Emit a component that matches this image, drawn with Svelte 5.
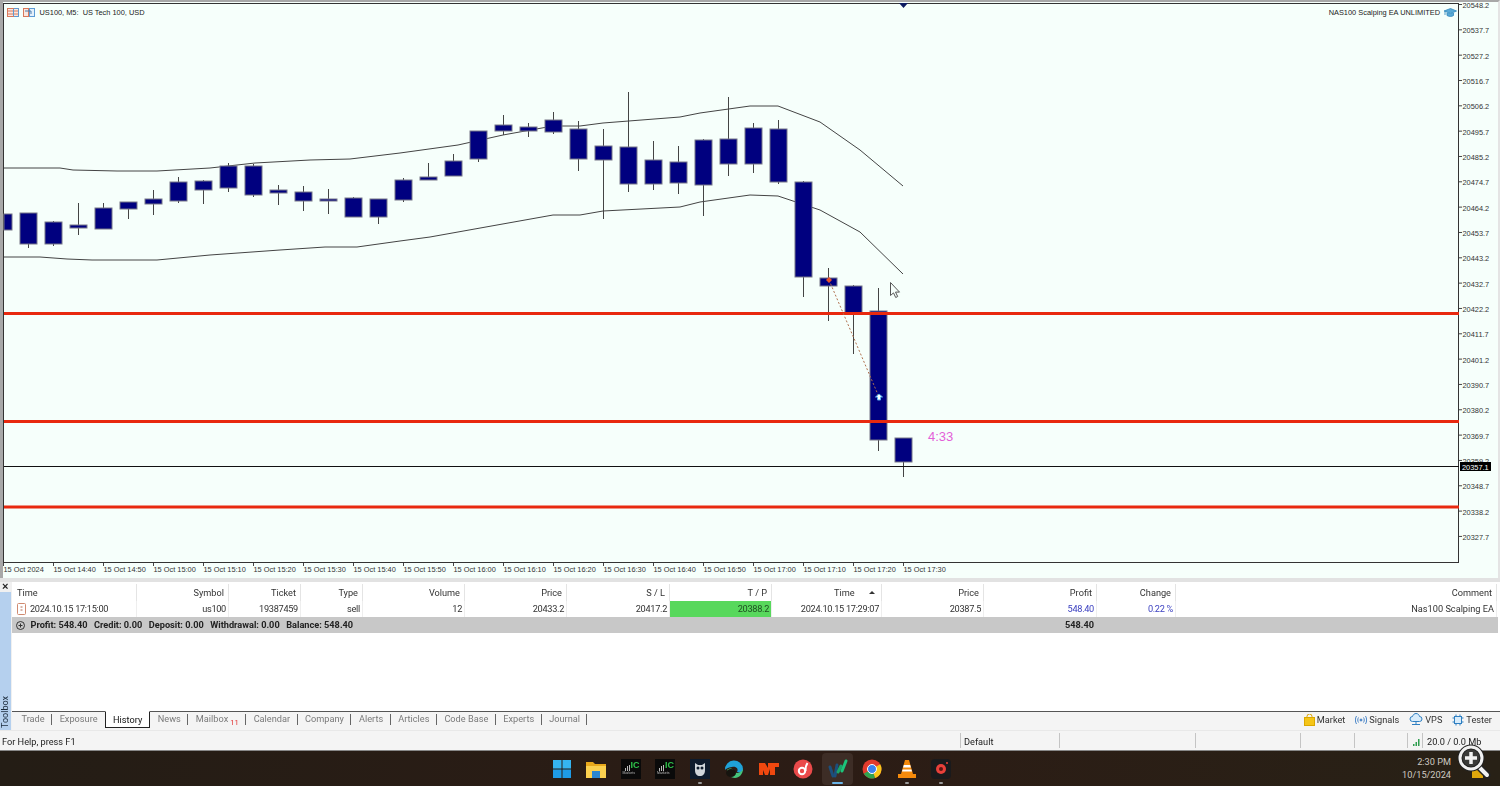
<script>
  // [bodyTop, bodyBottom, wickTop, wickBottom]
  const candles = [
    [214,230,214,230],[213,244,213,248],[222,244,221,246],[225,228,203,235],[208,229,203,229],
    [202,209,202,219],[199,204,190,215],[182,201,177,203],[181,190,180,204],[166,188,163,192],
    [166,195,164,197],[190,193,185,205],[192,201,186,211],[199,201,189,214],[198,217,197,217],
    [199,217,199,224],[180,200,178,202],[177,180,163,180],[161,176,154,176],[131,159,131,162],
    [125,131,115,135],[127,131,123,137],[120,132,112,134],[129,159,121,171],[146,160,129,219],
    [147,184,92,192],[160,184,141,190],[162,183,146,194],[140,185,139,216],[139,164,97,176],
    [128,164,123,173],[129,182,120,184],[182,277,181,297],[278,286,268,321],[286,314,285,354],
    [311,440,288,451],[438,462,438,477]
  ];
  const upper = "4,168 60,168 73,170 117,171 157,171 210,168 255,163 310,160 350,159 400,153 458,145 503,135 553,126 580,126 603,123 680,117 700,113 750,106 778,106 820,122 860,150 903,186";
  const lower = "4,257 40,257 67,259 92,260 117,260 157,260 210,255 280,250 325,247 357,247 400,241 430,237 553,215 580,215 603,211 680,207 700,202 750,195 778,196 820,210 860,232 903,274";
  const redLines = [313.5, 421.5, 507];

  const prices = [];
  for (let i = 0; i < 22; i++) {
    prices.push({ label: (20548.2 - i * 10.5).toFixed(1), y: 4.5 + i * 25.33 });
  }
  const dates = ["15 Oct 2024","15 Oct 14:40","15 Oct 14:50","15 Oct 15:00","15 Oct 15:10","15 Oct 15:20","15 Oct 15:30","15 Oct 15:40","15 Oct 15:50","15 Oct 16:00","15 Oct 16:10","15 Oct 16:20","15 Oct 16:30","15 Oct 16:40","15 Oct 16:50","15 Oct 17:00","15 Oct 17:10","15 Oct 17:20","15 Oct 17:30"];

  const tabs = [
    { name: "Trade" }, { name: "Exposure" }, { name: "History", active: true }, { name: "News" },
    { name: "Mailbox", badge: "11" }, { name: "Calendar" }, { name: "Company" }, { name: "Alerts" },
    { name: "Articles" }, { name: "Code Base" }, { name: "Experts" }, { name: "Journal" }
  ];
</script>

<div class="page">
  <div class="chart">
    <svg width="1500" height="578" viewBox="0 0 1500 578">
      <rect x="3.5" y="3.5" width="1455" height="559" fill="none" stroke="#333" />
      <path d="M899 3h9l-4.500 5z" fill="#0b1a60" />

      <polyline points={upper} class="band" />
      <polyline points={lower} class="band" />

      {#each candles as c, i}
        <line x1={3.5 + i * 25} x2={3.5 + i * 25} y1={c[2]} y2={c[3]} class="wick" />
        <rect x={i == 0 ? 4 : i * 25 - 5} y={c[0]} width={i == 0 ? 8 : 17} height={c[1] - c[0]} class="body" />
      {/each}

      {#each redLines as y}
        <rect x="4" y={y - 1.5} width="1455" height="3" fill="#e8290f" />
      {/each}
      <line x1="4" x2="1459" y1="466.5" y2="466.5" stroke="#111" />

      <line x1="829" y1="280" x2="879" y2="397" stroke="#b0714f" stroke-dasharray="2 2" />
      <path d="M826 280l3-3 3 3-3 3z" fill="#e8502a" />
      <path d="M879 394l3.500 3h-2v3h-3v-3h-2z" fill="#fff" stroke="#5ab0f0" />

      <!-- mouse pointer -->
      <path d="M890.500 282.500v13l3-2.600 2.200 4.600 2-1-2.200-4.400h4z" fill="#f6fffb" stroke="#555" />

      <text x="928" y="441" class="timer">4:33</text>

      <!-- chart header -->
      <g>
        <rect x="7.500" y="8.500" width="11" height="8" fill="#fbe7df" stroke="#d9785a" />
        <path d="M8 11h10M8 14h10" stroke="#d9785a" />
        <path d="M13.500 9v7" stroke="#5b9bd5" />
        <path d="M14 8.500h4.500v8h-4.500" fill="none" stroke="#5b9bd5" />
        <rect x="23.500" y="8.500" width="5" height="8" fill="#fbe7df" stroke="#d9785a" />
        <rect x="29.500" y="8.500" width="5" height="8" fill="#e4f0fb" stroke="#5b9bd5" />
        <path d="M25 11h6v3" fill="none" stroke="#4a7fb0" />
      </g>
      <text x="39.500" y="15" class="head">US100, M5:&nbsp; US Tech 100, USD</text>
      <text x="1440" y="15" class="head" text-anchor="end">NAS100 Scalping EA UNLIMITED</text>
      <path d="M1444 11l6.500-2.500 6 2.500-6 2.500zM1447 13v2.500c2 1.200 5 1.200 6.500 0v-2.500M1445 11.500v3.500" fill="#5aa9d6" stroke="#2f86bd" stroke-width=".8" />

      <!-- price scale -->
      {#each prices as p}
        <line x1="1459" x2="1462" y1={p.y} y2={p.y} stroke="#444" />
        <text x="1462.500" y={p.y + 3.5} class="axis">{p.label}</text>
      {/each}
      <rect x="1460" y="462" width="31" height="9" fill="#000" />
      <text x="1462" y="469.500" class="axis cur">20357.1</text>

      <!-- time scale -->
      {#each dates as d, i}
        <line x1={3.5 + i * 50} x2={3.5 + i * 50} y1="563" y2="566" stroke="#444" />
        <text x={3.5 + i * 50} y="572" class="axis">{d}</text>
      {/each}
    </svg>
  </div>

  <div class="toolbox">
    <div class="strip">
      <div class="close">×</div>
      <div class="rail"><span>Toolbox</span></div>
    </div>
    <div class="main">
      <div class="table">
        <div class="row header">
          <div class="left">Time</div><div>Symbol</div><div>Ticket</div><div>Type</div><div>Volume</div>
          <div>Price</div><div>S / L</div><div>T / P</div><div class="sorted">Time <i class="arrow"></i></div><div>Price</div><div>Profit</div><div>Change</div><div>Comment</div>
        </div>
        <div class="row values">
          <div class="left">
            <svg class="doc" width="10" height="12" viewBox="0 0 10 12"><rect x=".5" y=".5" width="8" height="11" rx="1" fill="#fff" stroke="#d08a70" /><path d="M3.500 4h2M3.500 7h2" stroke="#b06a50" /></svg>
            2024.10.15 17:15:00
          </div>
          <div>us100</div><div>19387459</div><div>sell</div><div>12</div><div>20433.2</div><div>20417.2</div>
          <div class="tp">20388.2</div><div>2024.10.15 17:29:07</div><div>20387.5</div>
          <div class="blue">548.40</div><div class="blue">0.22 %</div><div>Nas100 Scalping EA</div>
        </div>
        <div class="row total">
          <div class="sum">
            <svg width="9" height="9" viewBox="0 0 9 9"><circle cx="4.500" cy="4.500" r="4" fill="none" stroke="#333" /><path d="M2.500 4.500h4M4.500 2.500v4" stroke="#333" /></svg>
            <span>Profit: 548.40</span><span>Credit: 0.00</span><span>Deposit: 0.00</span><span>Withdrawal: 0.00</span><span>Balance: 548.40</span>
          </div>
          <div class="sumval">548.40</div>
        </div>
      </div>

      <div class="tabbar">
        <div class="tabs">
          {#each tabs as t, i}
            <div class="tab" class:active={t.active} class:nosep={t.active || (tabs[i + 1] && tabs[i + 1].active)}>
              {t.name}{#if t.badge}<sub>{t.badge}</sub>{/if}
            </div>
          {/each}
        </div>
        <div class="links">
          <div class="link">
            <svg width="11" height="12" viewBox="0 0 11 12"><path d="M3 4V2.500a2.500 2.500 0 0 1 5 0V4" fill="none" stroke="#d9a300" /><rect x=".5" y="3.500" width="10" height="8" fill="#f5c518" stroke="#dba800" /></svg>
            Market
          </div>
          <div class="link">
            <svg width="12" height="10" viewBox="0 0 12 10" fill="none" stroke="#4a86c8"><circle cx="6" cy="5" r="1" fill="#4a86c8" /><path d="M3.500 2.500c-1 1.500-1 3.500 0 5M8.500 2.500c1 1.500 1 3.500 0 5M1.500 1c-1.500 2.500-1.500 5.500 0 8M10.500 1c1.500 2.500 1.500 5.500 0 8" /></svg>
            Signals
          </div>
          <div class="link">
            <svg width="14" height="13" viewBox="0 0 14 13" fill="none" stroke="#2f7fc1"><path d="M3.500 8.500a2.500 2.500 0 0 1 0-5c.6-2 2-3 3.500-3 2 0 3.200 1.300 3.500 3a2.500 2.500 0 0 1 0 5z" fill="#d8ecfb" /><path d="M7 8.500v3M3 11.500h8" /></svg>
            VPS
          </div>
          <div class="link">
            <svg width="12" height="12" viewBox="0 0 12 12" fill="none" stroke="#2f7fc1"><rect x="2.500" y="2.500" width="7" height="7" fill="#d8ecfb" /><path d="M4 .5v2M8 .5v2M4 9.500v2M8 9.500v2M.5 4h2M.5 8h2M9.500 4h2M9.500 8h2" /></svg>
            Tester
          </div>
        </div>
      </div>
    </div>
  </div>

  <div class="status">
    <div class="cell help">For Help, press F1</div>
    <div class="cell profile">Default</div>
    <div class="cell c3"></div>
    <div class="cell c4"></div>
    <div class="cell c5"></div>
    <div class="cell c6"></div>
    <div class="cell conn">
      <svg width="8" height="8" viewBox="0 0 8 8"><path d="M1 6h1.500v2H1zM3.500 4H5v4H3.500zM6 1h1.500v7H6z" fill="#2e9e4f" /></svg>
    </div>
    <div class="cell traffic">20.0 / 0.0 Mb</div>
  </div>

  <div class="taskbar">
    <div class="apps">
      <div class="app">
        <svg width="20" height="20" viewBox="0 0 20 20" fill="#35b4f0"><rect x="1" y="1" width="8.500" height="8.500" /><rect x="10.500" y="1" width="8.500" height="8.500" /><rect x="1" y="10.500" width="8.500" height="8.500" fill="#1e9be6" /><rect x="10.500" y="10.500" width="8.500" height="8.500" fill="#1e9be6" /></svg>
      </div>
      <div class="app">
        <svg width="20" height="18" viewBox="0 0 20 18"><path d="M0 2h7l2 2h11v14H0z" fill="#e8a81c" /><rect y="6" width="20" height="12" fill="#fbd04f" /><rect x="6" y="11" width="8" height="7" fill="#2a86d0" /></svg>
      </div>
      <div class="app">
        <svg width="20" height="20" viewBox="0 0 20 20"><rect width="20" height="20" fill="#0a0a0a" /><path d="M4 9h1v3H4zM6 7h1v5H6zM8 6h1v6H8z" fill="#bbb" /></svg>
        <span class="ic">IC</span><span class="mk">Markets</span>
      </div>
      <div class="app">
        <svg width="20" height="20" viewBox="0 0 20 20"><rect width="20" height="20" fill="#0a0a0a" /><path d="M4 9h1v3H4zM6 7h1v5H6zM8 6h1v6H8z" fill="#bbb" /></svg>
        <span class="ic">IC</span><span class="mk">Markets</span>
      </div>
      <div class="app dot">
        <svg width="20" height="20" viewBox="0 0 20 20"><rect width="20" height="20" fill="#0d1a2c" /><path d="M5 4l3 2h4l3-2v7c0 4-2 6-5 6s-5-2-5-6z" fill="#cfd4da" /><circle cx="8" cy="9" r="1.500" fill="#0d1a2c" /><circle cx="12" cy="9" r="1.500" fill="#0d1a2c" /></svg>
      </div>
      <div class="app">
        <svg width="20" height="20" viewBox="0 0 20 20"><path d="M1 11a9 9 0 0 1 18-1c0 3-3 4-6 3 2-3-1-6-5-5-4 0-7 3-7 3z" fill="#1fa2d8" /><path d="M19 10c0 5-4 9-8 9-5 0-8-4-8-8 2-2 5-2 6 0 0 3 7 5 10-1z" fill="#46c47a" /><ellipse cx="7" cy="14" rx="5" ry="4" fill="#16140f" /></svg>
      </div>
      <div class="app">
        <svg width="20" height="14" viewBox="0 0 20 14"><path d="M0 1h6l3 5V1h11v4h-4v8h-5V7l-2 6H6L4 8v5H0z" fill="#f0480f" /></svg>
      </div>
      <div class="app">
        <svg width="20" height="20" viewBox="0 0 20 20"><circle cx="10" cy="10" r="9.500" fill="#ea4a4a" /><circle cx="9" cy="12" r="3.200" fill="none" stroke="#fff" stroke-width="2" /><path d="M12.500 12c0-3 .5-6 2-8" fill="none" stroke="#fff" stroke-width="2" /></svg>
      </div>
      <div class="app running">
        <svg width="20" height="20" viewBox="0 0 20 20" fill="none" stroke-linecap="round"><path d="M2 8l3 9" stroke="#1c4f7c" stroke-width="3" /><path d="M9 6l-2 11" stroke="#1c4f7c" stroke-width="3" /><path d="M10 13l3-6" stroke="#1aa36a" stroke-width="3" /><path d="M14 12l4-10" stroke="#1cc47a" stroke-width="3" /></svg>
      </div>
      <div class="app">
        <svg width="20" height="20" viewBox="0 0 20 20"><circle cx="10" cy="10" r="9.500" fill="#e33b2e" /><path d="M10 10l8.200-4.700A9.500 9.500 0 0 1 13 19z" fill="#f8c71c" /><path d="M10 10L1.800 14.800A9.500 9.500 0 0 0 13 19z" fill="#2ea44f" /><circle cx="10" cy="10" r="4.500" fill="#3b82f0" stroke="#fff" /></svg>
      </div>
      <div class="app dot">
        <svg width="18" height="20" viewBox="0 0 18 20"><path d="M7 1h4l4 14H3z" fill="#f58a0b" /><path d="M5.800 6h6.400l.7 2.500H5.100zM4.600 10.500h8.800l.6 2H4z" fill="#fff" /><rect x="0" y="15" width="18" height="4" fill="#f58a0b" /></svg>
      </div>
      <div class="app dot">
        <svg width="20" height="20" viewBox="0 0 20 20"><rect width="20" height="20" rx="4" fill="#1a1a1c" /><circle cx="10" cy="10" r="5" fill="#e8403a" /><circle cx="10" cy="10" r="2" fill="#5a1512" /><circle cx="16" cy="4" r="1" fill="#e8403a" /></svg>
      </div>
    </div>
    <div class="clock">
      <div>2:30 PM</div>
      <div>10/15/2024</div>
    </div>
    <div class="magnifier">
      <svg width="36" height="36" viewBox="0 0 36 36">
        <rect x="16" y="26" width="11" height="9" fill="#e0a80c" />
        <path d="M22 23l9 9" stroke="#222" stroke-width="7" stroke-linecap="round" />
        <path d="M22 23l9 9" stroke="#f2f2f2" stroke-width="4" stroke-linecap="round" />
        <circle cx="15" cy="15" r="11" fill="#3a3a38" stroke="#222" stroke-width="5" />
        <circle cx="15" cy="15" r="11" fill="none" stroke="#f2f2f2" stroke-width="3" />
        <path d="M9 15h12M15 9v12" stroke="#f2f2f2" stroke-width="3.500" />
      </svg>
    </div>
  </div>
</div>

<style>
  :global(body) {
    margin: 0;
    background: #fff;
    overflow: hidden;
  }

  .page {
    width: 1500px;
    height: 786px;
    display: flex;
    flex-direction: column;
    font-family: Roboto, "Noto Sans", sans-serif;
    font-size: 9.2px;
    color: #333;
    filter: blur(.3px);
  }

  /* chart */
  .chart {
    height: 578px;
    flex: none;
    background: #f6fffb;
    border-top: 2px solid #a8a8a8;
    border-left: 3px solid #a8a8a8;
    border-right: 2px solid #e4e4e4;
    box-sizing: border-box;
    overflow: hidden;
  }
  .chart svg {
    display: block;
    margin: -2px 0 0 -3px;
  }
  .band {
    fill: none;
    stroke: #444;
    stroke-width: 1;
  }
  .wick {
    stroke: #444;
    stroke-width: 1;
  }
  .body {
    fill: #00007f;
    stroke: #778;
    stroke-width: 1;
  }
  .timer {
    font-family: "Liberation Sans", sans-serif;
    font-size: 13px;
    fill: #e35fd8;
  }
  .head {
    font-family: "Liberation Sans", sans-serif;
    font-size: 7.400px;
    fill: #222;
  }
  .axis {
    font-family: "Liberation Sans", sans-serif;
    font-size: 7.400px;
    fill: #333;
  }
  .cur {
    fill: #fff;
  }

  /* toolbox */
  .toolbox {
    height: 153px;
    flex: none;
    display: flex;
    border-top: 4px solid #e2e2e2;
    border-bottom: 1px solid #e8e8e8;
    box-sizing: border-box;
  }
  .strip {
    width: 12px;
    flex: none;
    display: flex;
    flex-direction: column;
    background: #f0f0f0;
  }
  .close {
    height: 10px;
    font: bold 11px/8px "Liberation Sans", sans-serif;
    padding-left: 2px;
    color: #222;
  }
  .rail {
    flex: 1;
    background: #b5d0ee;
    display: flex;
    align-items: flex-end;
    margin-right: 1px;
  }
  .rail span {
    writing-mode: vertical-rl;
    transform: rotate(180deg);
    font-size: 9px;
    line-height: 11px;
    padding-top: 2px;
    color: #1a2a3a;
  }
  .main {
    flex: 1;
    display: flex;
    flex-direction: column;
    min-width: 0;
    background: #fff;
  }
  .table {
    flex: 1;
    padding-top: 2px;
  }
  .row {
    display: grid;
    grid-template-columns: 125px 92px 72px 62px 102px 102px 103px 102px 110px 102px 113px 79px 321px;
    height: 16px;
    line-height: 16px;
  }
  .row > div {
    text-align: right;
    padding-right: 3px;
    border-right: 1px solid #eee;
    white-space: nowrap;
    overflow: hidden;
  }
  .row > .left {
    text-align: left;
    padding-left: 5px;
    padding-right: 0;
    display: flex;
    align-items: center;
    gap: 3px;
  }
  .values > div {
    padding-right: 2px;
    letter-spacing: -.3px;
  }
  .values > div:last-child {
    letter-spacing: 0;
  }
  .header {
    height: 17px;
    line-height: 17px;
  }
  .header > div {
    padding-right: 4px;
    border-right-color: #e4e4e4;
  }
  .sorted {
    padding-right: 6px !important;
  }
  .arrow {
    display: inline-block;
    width: 0;
    height: 0;
    border: 3px solid transparent;
    border-top: 0;
    border-bottom: 3px solid #333;
    margin: 0 0 2px 12px;
  }
  .tp {
    background: #58d85c;
    color: #1f4d22;
  }
  .blue {
    color: #3a3fc0;
  }
  .total {
    background: #c8c8c8;
    font-weight: 700;
    color: #222;
    margin-right: 2px;
    grid-template-columns: 972px 113px 1fr;
  }
  .total > div {
    border: 0;
  }
  .total > .sum {
    text-align: left;
    padding-left: 4px;
    display: flex;
    align-items: center;
    gap: 6.500px;
  }
  .total > .sum svg {
    margin-right: -1px;
  }

  .tabbar {
    height: 19px;
    flex: none;
    display: flex;
    justify-content: space-between;
    border-top: 1px solid #555;
    background: #f4f4f4;
    box-sizing: border-box;
  }
  .tabs {
    display: flex;
    padding-left: 2px;
  }
  .tab {
    padding: 0 7.500px;
    line-height: 13px;
    color: #7a7a7a;
    position: relative;
  }
  .tab::after {
    content: "";
    position: absolute;
    right: 0;
    top: 2px;
    height: 11px;
    border-right: 1px solid #666;
  }
  .tab.nosep::after {
    display: none;
  }
  .tab.active {
    background: #fff;
    color: #111;
    margin-top: -1px;
    height: 15px;
    line-height: 15px;
    padding: 0 7px;
    border: 1px solid #222;
    border-top-color: #fff;
  }
  .tab sub {
    font-size: 7.500px;
    color: #e03030;
    margin-left: 2px;
    line-height: 0;
  }
  .links {
    display: flex;
    gap: 10px;
    padding-right: 8px;
    align-items: center;
    height: 15px;
  }
  .link {
    display: flex;
    align-items: center;
    gap: 2px;
    color: #333;
  }

  .status {
    height: 20px;
    flex: none;
    display: flex;
    background: #f4f4f4;
    line-height: 20px;
    color: #222;
    border-bottom: 1px solid #888;
    box-sizing: border-box;
  }
  .cell {
    box-sizing: border-box;
    border-right: 1px solid #c4c4c4;
    margin: 2px 0;
    line-height: 18px;
    padding-left: 3px;
    white-space: nowrap;
  }
  .help { width: 960px; border: 0; padding-left: 2px; }
  .profile { width: 100px; border-left: 1px solid #c4c4c4; }
  .c3 { width: 136px; }
  .c4 { width: 105px; }
  .c5 { width: 54px; }
  .c6 { width: 53px; }
  .conn { width: 15px; padding-left: 4px; }
  .conn svg { display: block; margin-top: 5px; }
  .traffic { border: 0; padding-left: 4px; }

  /* windows taskbar */
  .taskbar {
    flex: 1;
    position: relative;
    display: flex;
    background: linear-gradient(90deg, #241d15, #2c1c15 55%, #282116);
  }
  .apps {
    display: flex;
    margin-left: 544.500px;
    align-items: center;
  }
  .app {
    width: 34.500px;
    height: 36px;
    flex: none;
    display: flex;
    align-items: center;
    justify-content: center;
    position: relative;
  }
  .app.running::before {
    content: "";
    position: absolute;
    left: 1px;
    right: 2px;
    top: 2px;
    bottom: 2px;
    background: #3d2d26;
    border-radius: 4px;
  }
  .app svg {
    position: relative;
  }
  .app.running::after {
    content: "";
    position: absolute;
    left: 11px;
    right: 12px;
    bottom: 3px;
    height: 2px;
    border-radius: 1px;
    background: #6ab4e8;
  }
  .app.dot::after {
    content: "";
    position: absolute;
    left: 15px;
    bottom: 3px;
    width: 4px;
    height: 2px;
    border-radius: 1px;
    background: #9a9a9a;
  }
  .ic {
    position: absolute;
    left: 17px;
    top: 9px;
    font: 700 9px/10px "Liberation Sans", sans-serif;
    color: #2fc24a;
  }
  .mk {
    position: absolute;
    left: 9px;
    top: 20px;
    font: 3.500px/4px "Liberation Sans", sans-serif;
    color: #bbb;
  }
  .clock {
    margin-left: auto;
    margin-right: 49px;
    text-align: right;
    color: #cfcac2;
    font-size: 9.200px;
    line-height: 13px;
    padding-top: 4px;
  }
  .magnifier {
    position: absolute;
    left: 1456px;
    top: -8px;
  }
  .magnifier svg {
    display: block;
  }
</style>
